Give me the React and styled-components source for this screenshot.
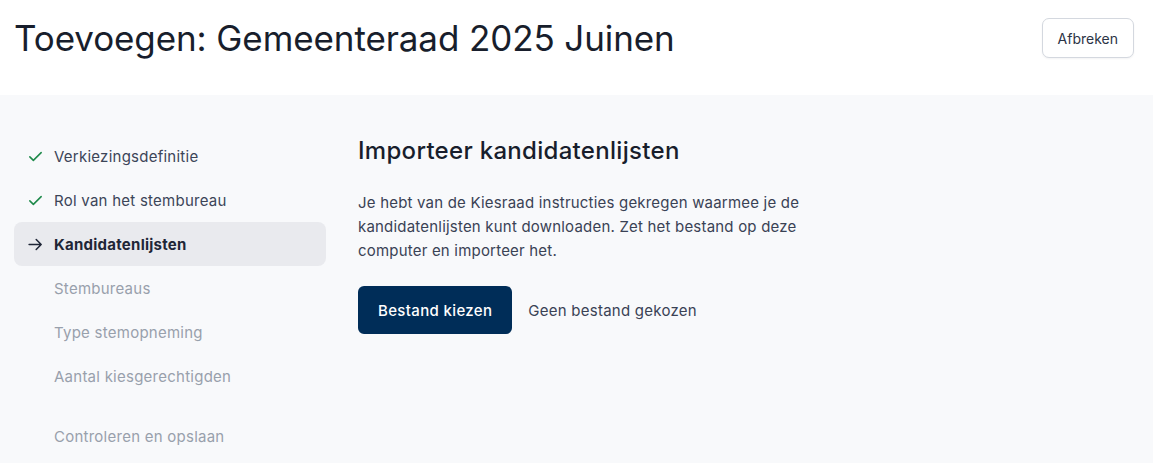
import React from "react";
import styled, { createGlobalStyle } from "styled-components";

const Global = createGlobalStyle`
  html, body { margin: 0; padding: 0; background: #ffffff; }
  body { font-family: "DM Sans", Inter, "Noto Sans", sans-serif; color: #1b2232; }
  * { box-sizing: border-box; }
`;

const Page = styled.div`
  display: flex;
  flex-direction: column;
  min-height: 463px;
`;

const Header = styled.header`
  display: flex;
  align-items: flex-start;
  justify-content: space-between;
  height: 95px;
  padding: 18px 19px 0 14px;
  background: #ffffff;
`;

const Title = styled.h1`
  margin: 0;
  padding-top: 0;
  font-family: Inter, sans-serif;
  font-weight: 400;
  font-size: 35px;
  line-height: 40px;
  letter-spacing: -0.1px;
  color: #181e2c;
`;

const GhostButton = styled.button`
  height: 40px;
  padding: 0 15px;
  border: 1px solid #d4d8df;
  border-radius: 7px;
  background: #ffffff;
  font-family: Inter, sans-serif;
  font-size: 14px;
  color: #2c3446;
  box-shadow: 0 1px 2px rgba(16, 24, 40, 0.05);
`;

const Body = styled.div`
  flex: 1;
  display: flex;
  background: #f8f9fb;
  padding: 39px 14px 0 14px;
`;

const Nav = styled.nav`
  width: 312px;
  display: flex;
  flex-direction: column;
`;

const Spacer = styled.div`
  height: 16px;
`;

const NavItem = styled.div`
  display: flex;
  align-items: center;
  height: 44px;
  padding-left: 13px;
  gap: 10px;
  border-radius: 8px;
  font-family: Inter, sans-serif;
  font-size: 15px;
  letter-spacing: 0.25px;
  background: ${(p) => (p.$state === "active" ? "#e9eaee" : "transparent")};
  font-weight: ${(p) => (p.$state === "active" ? 700 : 400)};
  color: ${(p) =>
    p.$state === "active" ? "#1f2637" : p.$state === "done" ? "#3c4558" : "#98a0ac"};
`;

const IconSlot = styled.span`
  width: 17px;
  height: 17px;
  display: inline-flex;
  align-items: center;
  justify-content: center;
`;

const Main = styled.main`
  margin-left: 32px;
  padding-top: 1px;
  max-width: 470px;
`;

const H2 = styled.h2`
  margin: 0;
  font-family: Inter, sans-serif;
  font-weight: 500;
  font-size: 24px;
  line-height: 32px;
  letter-spacing: 0.3px;
  color: #181e2c;
`;

const Para = styled.p`
  margin: 24px 0 0 0;
  font-family: Inter, sans-serif;
  font-size: 15px;
  line-height: 24px;
  letter-spacing: 0.2px;
  color: #3a4255;
`;

const FileRow = styled.div`
  display: flex;
  align-items: center;
  gap: 16px;
  margin-top: 23px;
`;

const PrimaryButton = styled.button`
  height: 48px;
  padding: 0 20px;
  border: none;
  border-radius: 6px;
  background: #002d58;
  color: #ffffff;
  font-family: Inter, sans-serif;
  font-size: 15px;
  font-weight: 500;
  letter-spacing: 0.35px;
`;

const FileLabel = styled.span`
  font-family: Inter, sans-serif;
  font-size: 15px;
  letter-spacing: 0.25px;
  color: #3a4255;
`;

const Check = () => (
  <svg width="17" height="17" viewBox="0 0 24 24" fill="none" stroke="#1e8a4a" strokeWidth="2.2" strokeLinecap="round" strokeLinejoin="round">
    <path d="M4 12.5l5 5L20 6.5" />
  </svg>
);

const Arrow = () => (
  <svg width="17" height="17" viewBox="0 0 24 24" fill="none" stroke="#1f2637" strokeWidth="2.2" strokeLinecap="round" strokeLinejoin="round">
    <path d="M3 12h17M13 5l7 7-7 7" />
  </svg>
);

const steps = [
  { label: "Verkiezingsdefinitie", state: "done" },
  { label: "Rol van het stembureau", state: "done" },
  { label: "Kandidatenlijsten", state: "active" },
  { label: "Stembureaus", state: "todo" },
  { label: "Type stemopneming", state: "todo" },
  { label: "Aantal kiesgerechtigden", state: "todo" },
];

export default function App() {
  return (
    <>
      <Global />
      <Page>
        <Header>
          <Title>Toevoegen: Gemeenteraad 2025 Juinen</Title>
          <GhostButton>Afbreken</GhostButton>
        </Header>
        <Body>
          <Nav>
            {steps.map((s) => (
              <NavItem key={s.label} $state={s.state}>
                <IconSlot>
                  {s.state === "done" && <Check />}
                  {s.state === "active" && <Arrow />}
                </IconSlot>
                {s.label}
              </NavItem>
            ))}
            <Spacer />
            <NavItem $state="todo">
              <IconSlot />
              Controleren en opslaan
            </NavItem>
          </Nav>
          <Main>
            <H2>Importeer kandidatenlijsten</H2>
            <Para>
              Je hebt van de Kiesraad instructies gekregen waarmee je de kandidatenlijsten kunt downloaden. Zet het bestand op deze computer en importeer het.
            </Para>
            <FileRow>
              <PrimaryButton>Bestand kiezen</PrimaryButton>
              <FileLabel>Geen bestand gekozen</FileLabel>
            </FileRow>
          </Main>
        </Body>
      </Page>
    </>
  );
}
